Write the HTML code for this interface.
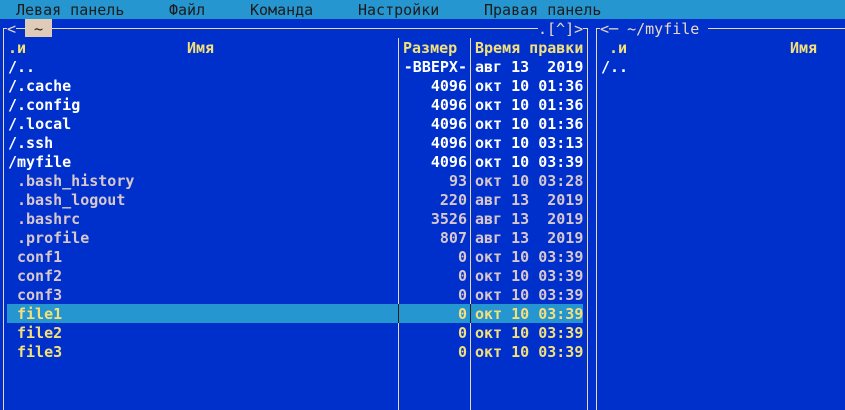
<!DOCTYPE html>
<html><head><meta charset="utf-8"><style>
body{margin:0;width:845px;height:410px;overflow:hidden;background:#0030cc;position:relative;font-family:"DejaVu Sans Mono","Liberation Mono",monospace;font-size:15px;font-weight:bold;}
.s{position:absolute;white-space:pre;line-height:19px;height:19px;padding-top:1px;box-sizing:border-box;}
.menu{position:absolute;left:0;top:0;width:845px;height:19px;background:#2596d0;}
.m{color:#1c1c1c;font-weight:normal;}
.v{position:absolute;width:1px;background:#e8d8c8;}
.h{position:absolute;height:1px;background:#e8d8c8;}
.fr{color:#e8d8c8;font-weight:normal;background:#0030cc;}
.y{color:#f4e07a;}
.d{color:#ffffff;}
.f{color:#d8c8cc;}
.r{text-align:right;}
</style></head><body>
<div class="menu"></div>
<span class="s m" style="left:16px;top:0">Левая панель</span>
<span class="s m" style="left:169px;top:0">Файл</span>
<span class="s m" style="left:250px;top:0">Команда</span>
<span class="s m" style="left:358px;top:0">Настройки</span>
<span class="s m" style="left:484px;top:0">Правая панель</span>

<div class="h" style="left:3px;top:28px;width:584px"></div>
<div class="v" style="left:3px;top:28px;height:382px"></div>
<div class="v" style="left:398px;top:38px;height:372px"></div>
<div class="v" style="left:470px;top:38px;height:372px"></div>
<div class="v" style="left:587px;top:28px;height:382px"></div>
<div class="h" style="left:584px;top:28px;width:4px"></div>
<div class="h" style="left:596px;top:28px;width:249px"></div>
<div class="v" style="left:596px;top:28px;height:382px"></div>

<span class="s fr" style="left:7px;top:19px">&lt;</span>
<span class="s" style="left:25px;top:19px;width:27px;height:18px;background:#e0cbb8;color:#202020;text-align:center;font-weight:normal">~</span>
<span class="s fr" style="left:538px;top:19px">.[^]&gt;</span>
<span class="s fr" style="left:600px;top:19px">&lt;─ ~/myfile </span>

<span class="s y" style="left:8px;top:38px">.и</span>
<span class="s y" style="left:187px;top:38px">Имя</span>
<span class="s y" style="left:403px;top:38px">Размер</span>
<span class="s y" style="left:475px;top:38px">Время правки</span>
<span class="s y" style="left:609px;top:38px">.и</span>
<span class="s y" style="left:790px;top:38px">Имя</span>
<span class="s d" style="left:601px;top:57px">/..</span>

<div style="position:absolute;left:7px;top:304px;width:576px;height:19px;background:#2596d0"></div>
<div style="position:absolute;left:398px;top:304px;width:1px;height:19px;background:#1c1c1c"></div>
<div style="position:absolute;left:470px;top:304px;width:1px;height:19px;background:#1c1c1c"></div>

<span class="s d" style="left:8px;top:57px">/..</span><span class="s d r" style="left:400px;width:67px;top:57px">-ВВЕРХ-</span><span class="s d" style="left:475px;top:57px">авг 13  2019</span>
<span class="s d" style="left:8px;top:76px">/.cache</span><span class="s d r" style="left:400px;width:67px;top:76px">4096</span><span class="s d" style="left:475px;top:76px">окт 10 01:36</span>
<span class="s d" style="left:8px;top:95px">/.config</span><span class="s d r" style="left:400px;width:67px;top:95px">4096</span><span class="s d" style="left:475px;top:95px">окт 10 01:36</span>
<span class="s d" style="left:8px;top:114px">/.local</span><span class="s d r" style="left:400px;width:67px;top:114px">4096</span><span class="s d" style="left:475px;top:114px">окт 10 01:36</span>
<span class="s d" style="left:8px;top:133px">/.ssh</span><span class="s d r" style="left:400px;width:67px;top:133px">4096</span><span class="s d" style="left:475px;top:133px">окт 10 03:13</span>
<span class="s d" style="left:8px;top:152px">/myfile</span><span class="s d r" style="left:400px;width:67px;top:152px">4096</span><span class="s d" style="left:475px;top:152px">окт 10 03:39</span>
<span class="s f" style="left:17px;top:171px">.bash_history</span><span class="s f r" style="left:400px;width:67px;top:171px">93</span><span class="s f" style="left:475px;top:171px">окт 10 03:28</span>
<span class="s f" style="left:17px;top:190px">.bash_logout</span><span class="s f r" style="left:400px;width:67px;top:190px">220</span><span class="s f" style="left:475px;top:190px">авг 13  2019</span>
<span class="s f" style="left:17px;top:209px">.bashrc</span><span class="s f r" style="left:400px;width:67px;top:209px">3526</span><span class="s f" style="left:475px;top:209px">авг 13  2019</span>
<span class="s f" style="left:17px;top:228px">.profile</span><span class="s f r" style="left:400px;width:67px;top:228px">807</span><span class="s f" style="left:475px;top:228px">авг 13  2019</span>
<span class="s f" style="left:17px;top:247px">conf1</span><span class="s f r" style="left:400px;width:67px;top:247px">0</span><span class="s f" style="left:475px;top:247px">окт 10 03:39</span>
<span class="s f" style="left:17px;top:266px">conf2</span><span class="s f r" style="left:400px;width:67px;top:266px">0</span><span class="s f" style="left:475px;top:266px">окт 10 03:39</span>
<span class="s f" style="left:17px;top:285px">conf3</span><span class="s f r" style="left:400px;width:67px;top:285px">0</span><span class="s f" style="left:475px;top:285px">окт 10 03:39</span>
<span class="s y" style="left:17px;top:304px">file1</span><span class="s y r" style="left:400px;width:67px;top:304px">0</span><span class="s y" style="left:475px;top:304px">окт 10 03:39</span>
<span class="s y" style="left:17px;top:323px">file2</span><span class="s y r" style="left:400px;width:67px;top:323px">0</span><span class="s y" style="left:475px;top:323px">окт 10 03:39</span>
<span class="s y" style="left:17px;top:342px">file3</span><span class="s y r" style="left:400px;width:67px;top:342px">0</span><span class="s y" style="left:475px;top:342px">окт 10 03:39</span>
</body></html>
